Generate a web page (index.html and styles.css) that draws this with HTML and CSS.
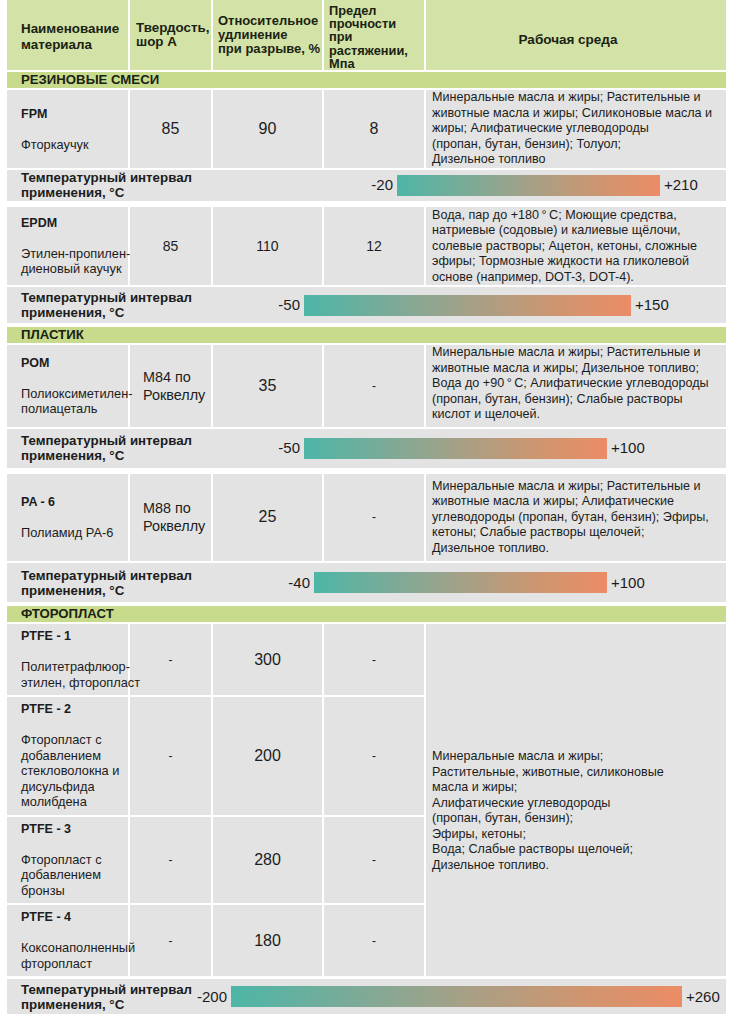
FILE: index.html
```html
<!DOCTYPE html>
<html lang="ru">
<head>
<meta charset="utf-8">
<title>Материалы</title>
<link rel="stylesheet" href="styles.css">
</head>
<body>
<div class="table">
  <div class="grid head">
    <div class="hc hc-name">Наименование<br>материала</div>
    <div class="hc">Твердость,<br>шор А</div>
    <div class="hc hc-elong">Относительное<br>удлинение<br>при разрыве, %</div>
    <div class="hc hc-tight">Предел<br>прочности<br>при<br>растяжении,<br>Мпа</div>
    <div class="hc hc-env">Рабочая среда</div>
  </div>

  <div class="section">РЕЗИНОВЫЕ СМЕСИ</div>

  <div class="grid mat">
    <div class="name"><b>FPM</b><span>Фторкаучук</span></div>
    <div class="val">85</div>
    <div class="val">90</div>
    <div class="val">8</div>
    <div class="env">Минеральные масла и жиры; Растительные и<br>животные масла и жиры; Силиконовые масла и<br>жиры; Алифатические углеводороды<br>(пропан, бутан, бензин); Толуол;<br>Дизельное топливо</div>
  </div>
  <div class="temp t-sm">
    <div class="t-label">Температурный интервал<br>применения, °С</div>
    <div class="t-scale">
      <span class="t-min" style="width:200px">-20</span>
      <span class="t-bar" style="width:263px"></span>
      <span class="t-max">+210</span>
    </div>
  </div>

  <div class="grid mat spaced">
    <div class="name"><b>EPDM</b><span>Этилен-пропилен-<br>диеновый каучук</span></div>
    <div class="val small">85</div>
    <div class="val small">110</div>
    <div class="val small">12</div>
    <div class="env env-epdm">Вода, пар до +180&#8201;°&#8201;С; Моющие средства,<br>натриевые (содовые) и калиевые щёлочи,<br>солевые растворы; Ацетон, кетоны, сложные<br>эфиры; Тормозные жидкости на гликолевой<br>основе (например, DOT-3, DOT-4).</div>
  </div>
  <div class="temp t-md">
    <div class="t-label">Температурный интервал<br>применения, °С</div>
    <div class="t-scale">
      <span class="t-min" style="width:107px">-50</span>
      <span class="t-bar" style="width:327px"></span>
      <span class="t-max">+150</span>
    </div>
  </div>

  <div class="section after-temp">ПЛАСТИК</div>

  <div class="grid mat">
    <div class="name"><b>POM</b><span>Полиоксиметилен-<br>полиацеталь</span></div>
    <div class="val text">M84 по<br>Роквеллу</div>
    <div class="val">35</div>
    <div class="val dash">-</div>
    <div class="env env-pom">Минеральные масла и жиры; Растительные и<br>животные масла и жиры; Дизельное топливо;<br>Вода до +90&#8201;°&#8201;С; Алифатические углеводороды<br>(пропан, бутан, бензин); Слабые растворы<br>кислот и щелочей.</div>
  </div>
  <div class="temp t-lg">
    <div class="t-label">Температурный интервал<br>применения, °С</div>
    <div class="t-scale">
      <span class="t-min" style="width:107px">-50</span>
      <span class="t-bar" style="width:303px"></span>
      <span class="t-max">+100</span>
    </div>
  </div>

  <div class="grid mat spaced">
    <div class="name"><b>PA - 6</b><span>Полиамид РА-6</span></div>
    <div class="val text">M88 по<br>Роквеллу</div>
    <div class="val">25</div>
    <div class="val dash">-</div>
    <div class="env env-pa">Минеральные масла и жиры; Растительные и<br>животные масла и жиры; Алифатические<br>углеводороды (пропан, бутан, бензин); Эфиры,<br>кетоны; Слабые растворы щелочей;<br>Дизельное топливо.</div>
  </div>
  <div class="temp t-lg">
    <div class="t-label">Температурный интервал<br>применения, °С</div>
    <div class="t-scale">
      <span class="t-min" style="width:117px">-40</span>
      <span class="t-bar" style="width:293px"></span>
      <span class="t-max">+100</span>
    </div>
  </div>

  <div class="section after-temp">ФТОРОПЛАСТ</div>

  <div class="grid ptfe">
    <div class="name"><b>PTFE - 1</b><span>Политетрафлюор-<br>этилен, фторопласт</span></div>
    <div class="val dash">-</div>
    <div class="val">300</div>
    <div class="val dash">-</div>
    <div class="env env-span">Минеральные масла и жиры;<br>Растительные, животные, силиконовые<br>масла и жиры;<br>Алифатические углеводороды<br>(пропан, бутан, бензин);<br>Эфиры, кетоны;<br>Вода; Слабые растворы щелочей;<br>Дизельное топливо.</div>

    <div class="name"><b>PTFE - 2</b><span>Фторопласт с<br>добавлением<br>стекловолокна и<br>дисульфида<br>молибдена</span></div>
    <div class="val dash">-</div>
    <div class="val">200</div>
    <div class="val dash">-</div>

    <div class="name"><b>PTFE - 3</b><span>Фторопласт с<br>добавлением<br>бронзы</span></div>
    <div class="val dash">-</div>
    <div class="val">280</div>
    <div class="val dash">-</div>

    <div class="name"><b>PTFE - 4</b><span>Коксонаполненный<br>фторопласт</span></div>
    <div class="val dash">-</div>
    <div class="val">180</div>
    <div class="val dash">-</div>
  </div>
  <div class="temp t-last">
    <div class="t-label">Температурный интервал<br>применения, °С</div>
    <div class="t-scale">
      <span class="t-min" style="width:34px">-200</span>
      <span class="t-bar" style="width:451px"></span>
      <span class="t-max">+260</span>
    </div>
  </div>
</div>
</body>
</html>
```

FILE: styles.css
```css
* {
  box-sizing: border-box;
}

body {
  margin: 0;
  background: #ffffff;
  font-family: "Liberation Sans", Arial, sans-serif;
  color: #1c1c1c;
}

.table {
  width: 719px;
  margin-left: 7px;
  display: flex;
  flex-direction: column;
  gap: 2px;
}

.grid {
  display: grid;
  grid-template-columns: 121px 81px 109px 100px 300px;
  column-gap: 2px;
  row-gap: 2px;
}

/* header */
.head {
  height: 70px;
}

.hc {
  background: #d3e2a6;
  font-weight: bold;
  font-size: 13.4px;
  line-height: 14px;
  display: flex;
  align-items: center;
  padding-left: 6px;
  color: #1a2212;
  white-space: nowrap;
}

.hc-name {
  padding-left: 14px;
  line-height: 16px;
  padding-top: 3px;
}

.hc-elong {
  padding-left: 5px;
  font-size: 13px;
}

.hc-tight {
  padding-left: 5px;
  font-size: 12.8px;
  line-height: 13.2px;
  padding-top: 4px;
}

.hc-env {
  justify-content: center;
  padding: 9px 16px 0 0;
  font-size: 13.5px;
}

/* section bars */
.section {
  height: 16px;
  background: #c8db8d;
  font-weight: bold;
  font-size: 13.2px;
  line-height: 16px;
  padding-left: 14px;
  color: #1a2212;
}

.section.after-temp {
  margin-top: 2px;
}

/* material rows */
.mat.spaced {
  margin-top: 4px;
}

.name,
.val,
.env {
  background: #e3e3e3;
}

.name {
  display: flex;
  flex-direction: column;
  justify-content: center;
  padding: 5px 0 4px 14px;
  white-space: nowrap;
  position: relative;
  z-index: 1;
}

.ptfe .name {
  padding: 5px 0 5px 14px;
}

.name b {
  font-size: 12.5px;
  line-height: 15px;
}

.name span {
  margin-top: 15px;
  font-size: 12.8px;
  line-height: 15.5px;
}

.val {
  display: flex;
  align-items: center;
  justify-content: center;
  font-size: 16px;
  line-height: 18px;
}

.val.small {
  font-size: 14px;
}

.val.text {
  justify-content: flex-start;
  padding-left: 13px;
  font-size: 14.4px;
  line-height: 18px;
}

.val.dash {
  font-size: 12px;
}

.env {
  font-size: 12.6px;
  line-height: 15.5px;
  padding: 0 6px;
  white-space: nowrap;
}

.env-epdm {
  padding-top: 1px;
}

.env-pom {
  padding-bottom: 4px;
}

.env-pa {
  padding-top: 5px;
  padding-bottom: 5px;
}

.env-span {
  grid-column: 5;
  grid-row: 1 / span 4;
  display: flex;
  align-items: center;
  padding-top: 22px;
}

/* temperature rows */
.temp {
  display: flex;
  align-items: center;
  background: #e3e3e3;
}

.temp.t-sm {
  height: 31px;
}

.temp.t-md {
  height: 36px;
}

.temp.t-lg {
  height: 39px;
}

.temp.t-last {
  height: 35px;
  margin-top: 1px;
}

.t-label {
  width: 186px;
  flex: none;
  padding-left: 14px;
  font-weight: bold;
  font-size: 13.3px;
  line-height: 15px;
  white-space: nowrap;
}

.t-scale {
  display: flex;
  align-items: center;
  font-size: 15px;
  line-height: 18px;
}

.t-min {
  flex: none;
  text-align: right;
  margin-right: 4px;
}

.t-bar {
  flex: none;
  height: 21px;
  background: linear-gradient(to right, #4db6a7 0%, #7daa97 28%, #a7a086 52%, #cf956f 78%, #ec8c66 100%);
}

.t-max {
  margin-left: 4px;
}
```
